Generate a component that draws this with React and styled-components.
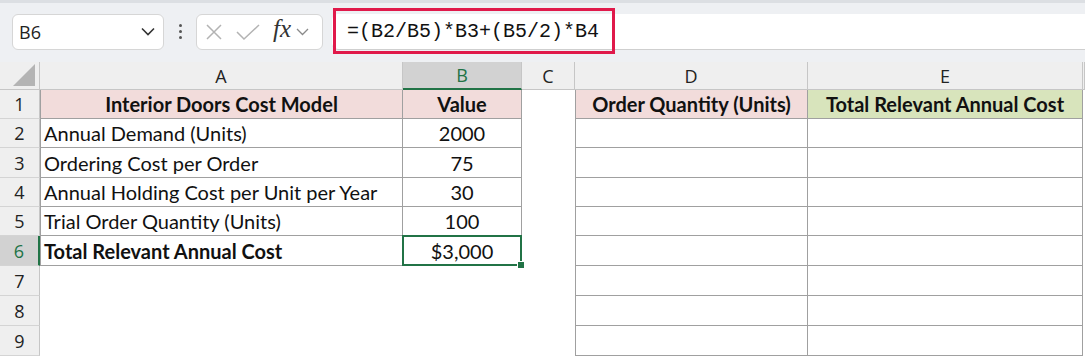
import styled, { createGlobalStyle } from "styled-components";

const GlobalStyle = createGlobalStyle`
  html, body { margin: 0; padding: 0; background: #ffffff; }
  body { font-family: "Lato", "Open Sans", sans-serif; }
`;

const COLS = ["A", "B", "C", "D", "E"];
const COL_WIDTHS = "40px 363px 119px 53px 233px 275px 2px";
const ROW_HEIGHTS = [29, 29, 30, 29, 29, 30, 30, 30, 30];

const rows = [
  { a: "Interior Doors Cost Model", b: "Value", head: true },
  { a: "Annual Demand (Units)", b: "2000" },
  { a: "Ordering Cost per Order", b: "75" },
  { a: "Annual Holding Cost per Unit per Year", b: "30" },
  { a: "Trial Order Quantity (Units)", b: "100" },
  { a: "Total Relevant Annual Cost", b: "$3,000", bold: true, selected: true },
  {},
  {},
  {},
];

const App = () => {
  return (
    <>
      <GlobalStyle />
      <Page>
        <Toolbar>
          <NameBox>
            <span>B6</span>
            <svg width="14" height="9" viewBox="0 0 14 9">
              <path d="M1 1.5 L7 7.5 L13 1.5" fill="none" stroke="#333" strokeWidth="1.6" />
            </svg>
          </NameBox>
          <Dots>
            <i />
            <i />
            <i />
          </Dots>
          <FxBox>
            <svg width="18" height="18" viewBox="0 0 18 18">
              <path d="M2 2 L16 16 M16 2 L2 16" stroke="#b3b3b3" strokeWidth="1.5" />
            </svg>
            <svg width="26" height="18" viewBox="0 0 26 18">
              <path d="M2 9 L9 16 L24 2" fill="none" stroke="#b3b3b3" strokeWidth="1.5" />
            </svg>
            <FxLabel>fx</FxLabel>
            <svg width="13" height="8" viewBox="0 0 13 8">
              <path d="M1 1 L6.5 6.5 L12 1" fill="none" stroke="#8a8a8a" strokeWidth="1.3" />
            </svg>
          </FxBox>
          <FormulaBar>
            <FormulaText>=(B2/B5)*B3+(B5/2)*B4</FormulaText>
            <Highlight />
          </FormulaBar>
        </Toolbar>

        <Sheet>
          <Corner>
            <svg width="22" height="22" viewBox="0 0 22 22">
              <path d="M22 0 L22 22 L0 22 Z" fill="#b4b4b4" />
            </svg>
          </Corner>
          {COLS.map((c) => (
            <ColHead key={c} active={c === "B"}>
              {c}
            </ColHead>
          ))}
          <ColHead edge />

          {rows.map((r, i) => {
            const n = i + 1;
            const filled = n <= 6;
            return [
              <RowHead key={`h${n}`} active={n === 6}>
                {n}
              </RowHead>,
              <Cell
                key={`a${n}`}
                bordered={filled}
                first
                fill={r.head ? "#f2dcdb" : undefined}
                align={r.head ? "center" : "left"}
                bold={r.head || r.bold}
              >
                {r.a}
              </Cell>,
              r.selected ? (
                <SelectedCell key={`b${n}`}>
                  {r.b}
                  <Handle />
                </SelectedCell>
              ) : (
                <Cell
                  key={`b${n}`}
                  bordered={filled}
                  fill={r.head ? "#f2dcdb" : undefined}
                  align="center"
                  bold={r.head}
                >
                  {r.b}
                </Cell>
              ),
              <Cell key={`c${n}`} />,
              <Cell
                key={`d${n}`}
                bordered
                first
                fill={n === 1 ? "#f2dcdb" : undefined}
                align="center"
                bold
              >
                {n === 1 ? "Order Quantity (Units)" : ""}
              </Cell>,
              <Cell
                key={`e${n}`}
                bordered
                fill={n === 1 ? "#d8e4bc" : undefined}
                align="center"
                bold
              >
                {n === 1 ? "Total Relevant Annual Cost" : ""}
              </Cell>,
              <Cell key={`x${n}`} />,
            ];
          })}
        </Sheet>
      </Page>
    </>
  );
};

export default App;

const Page = styled.div`
  width: 1085px;
  height: 357px;
  overflow: hidden;
  background: #ffffff;
`;

const Toolbar = styled.div`
  height: 62px;
  box-sizing: border-box;
  border-top: 3px solid #dcdfe3;
  background: #eef0f3;
  display: flex;
  align-items: center;
  padding-left: 12px;
`;

const NameBox = styled.div`
  width: 152px;
  height: 36px;
  box-sizing: border-box;
  background: #ffffff;
  border: 1px solid #d6d6d6;
  border-radius: 6px;
  display: flex;
  align-items: center;
  justify-content: space-between;
  padding: 0 8px 0 6px;
  font-family: "Open Sans", sans-serif;
  font-size: 18px;
  color: #222;
  margin-top: -2px;
`;

const Dots = styled.div`
  width: 32px;
  display: flex;
  flex-direction: column;
  align-items: center;
  gap: 3px;
  margin-top: -2px;
  i {
    width: 3px;
    height: 3px;
    border-radius: 50%;
    background: #555;
  }
`;

const FxBox = styled.div`
  width: 127px;
  height: 36px;
  box-sizing: border-box;
  background: #ffffff;
  border: 1px solid #d6d6d6;
  border-radius: 6px;
  display: flex;
  align-items: center;
  gap: 12px;
  padding-left: 8px;
  margin-top: -2px;
  svg:last-child {
    margin-left: -7px;
  }
`;

const FxLabel = styled.span`
  font-family: "Liberation Serif", serif;
  font-style: italic;
  font-size: 25px;
  color: #333;
  margin-top: -5px;
`;

const FormulaBar = styled.div`
  position: relative;
  flex: 1;
  height: 36px;
  margin-left: 9px;
  margin-top: -2px;
  background: #ffffff;
  border-bottom: 1px solid #cfcfcf;
  border-radius: 6px 0 0 6px;
  display: flex;
  align-items: center;
  box-sizing: border-box;
`;

const FormulaText = styled.span`
  font-family: "Liberation Mono", monospace;
  font-size: 20px;
  color: #111;
  margin-left: 15px;
`;

const Highlight = styled.div`
  position: absolute;
  left: 1px;
  top: -6px;
  width: 282px;
  height: 46px;
  box-sizing: border-box;
  border: 3px solid #e0194a;
`;

const Sheet = styled.div`
  display: grid;
  grid-template-columns: ${COL_WIDTHS};
  grid-template-rows: 28px ${ROW_HEIGHTS.map((h) => `${h}px`).join(" ")};
  font-family: "Lato", "Open Sans", sans-serif;
  font-size: 20px;
  color: #111;
`;

const Corner = styled.div`
  background: #efefef;
  border-right: 1px solid #c6c6c6;
  border-bottom: 1px solid #c6c6c6;
  box-sizing: border-box;
  display: flex;
  align-items: flex-end;
  justify-content: flex-end;
  padding: 0 4px 3px 0;
`;

const ColHead = styled.div`
  background: ${({ active }) => (active ? "#d2d2d2" : "#efefef")};
  border-right: 1px solid #c6c6c6;
  border-bottom: ${({ active }) => (active ? "2px solid #217346" : "1px solid #c6c6c6")};
  box-sizing: border-box;
  display: flex;
  align-items: center;
  justify-content: center;
  font-family: "Open Sans", sans-serif;
  font-size: 18px;
  color: ${({ active }) => (active ? "#217346" : "#222")};
`;

const RowHead = styled.div`
  background: ${({ active }) => (active ? "#d2d2d2" : "#efefef")};
  border-right: ${({ active }) => (active ? "2px solid #217346" : "1px solid #c6c6c6")};
  border-bottom: 1px solid #d4d4d4;
  box-sizing: border-box;
  display: flex;
  align-items: center;
  justify-content: center;
  font-family: "Open Sans", sans-serif;
  font-size: 18px;
  color: ${({ active }) => (active ? "#217346" : "#222")};
`;

const Cell = styled.div`
  background: ${({ fill }) => fill || "#ffffff"};
  border-right: ${({ bordered }) => (bordered ? "1px solid #a0a0a0" : "none")};
  border-bottom: ${({ bordered }) => (bordered ? "1px solid #a0a0a0" : "none")};
  border-left: ${({ bordered, first }) => (bordered && first ? "1px solid #a0a0a0" : "none")};
  box-sizing: border-box;
  display: flex;
  align-items: center;
  justify-content: ${({ align }) => (align === "center" ? "center" : "flex-start")};
  padding: 0 3px;
  font-weight: ${({ bold }) => (bold ? 700 : 400)};
  white-space: nowrap;
  overflow: hidden;
`;

const SelectedCell = styled.div`
  position: relative;
  border: 2px solid #217346;
  margin: -1px 0 0 -1px;
  box-sizing: border-box;
  display: flex;
  align-items: center;
  justify-content: center;
  background: #ffffff;
`;

const Handle = styled.span`
  position: absolute;
  right: -5px;
  bottom: -5px;
  width: 6px;
  height: 6px;
  background: #217346;
  border: 1px solid #ffffff;
`;
